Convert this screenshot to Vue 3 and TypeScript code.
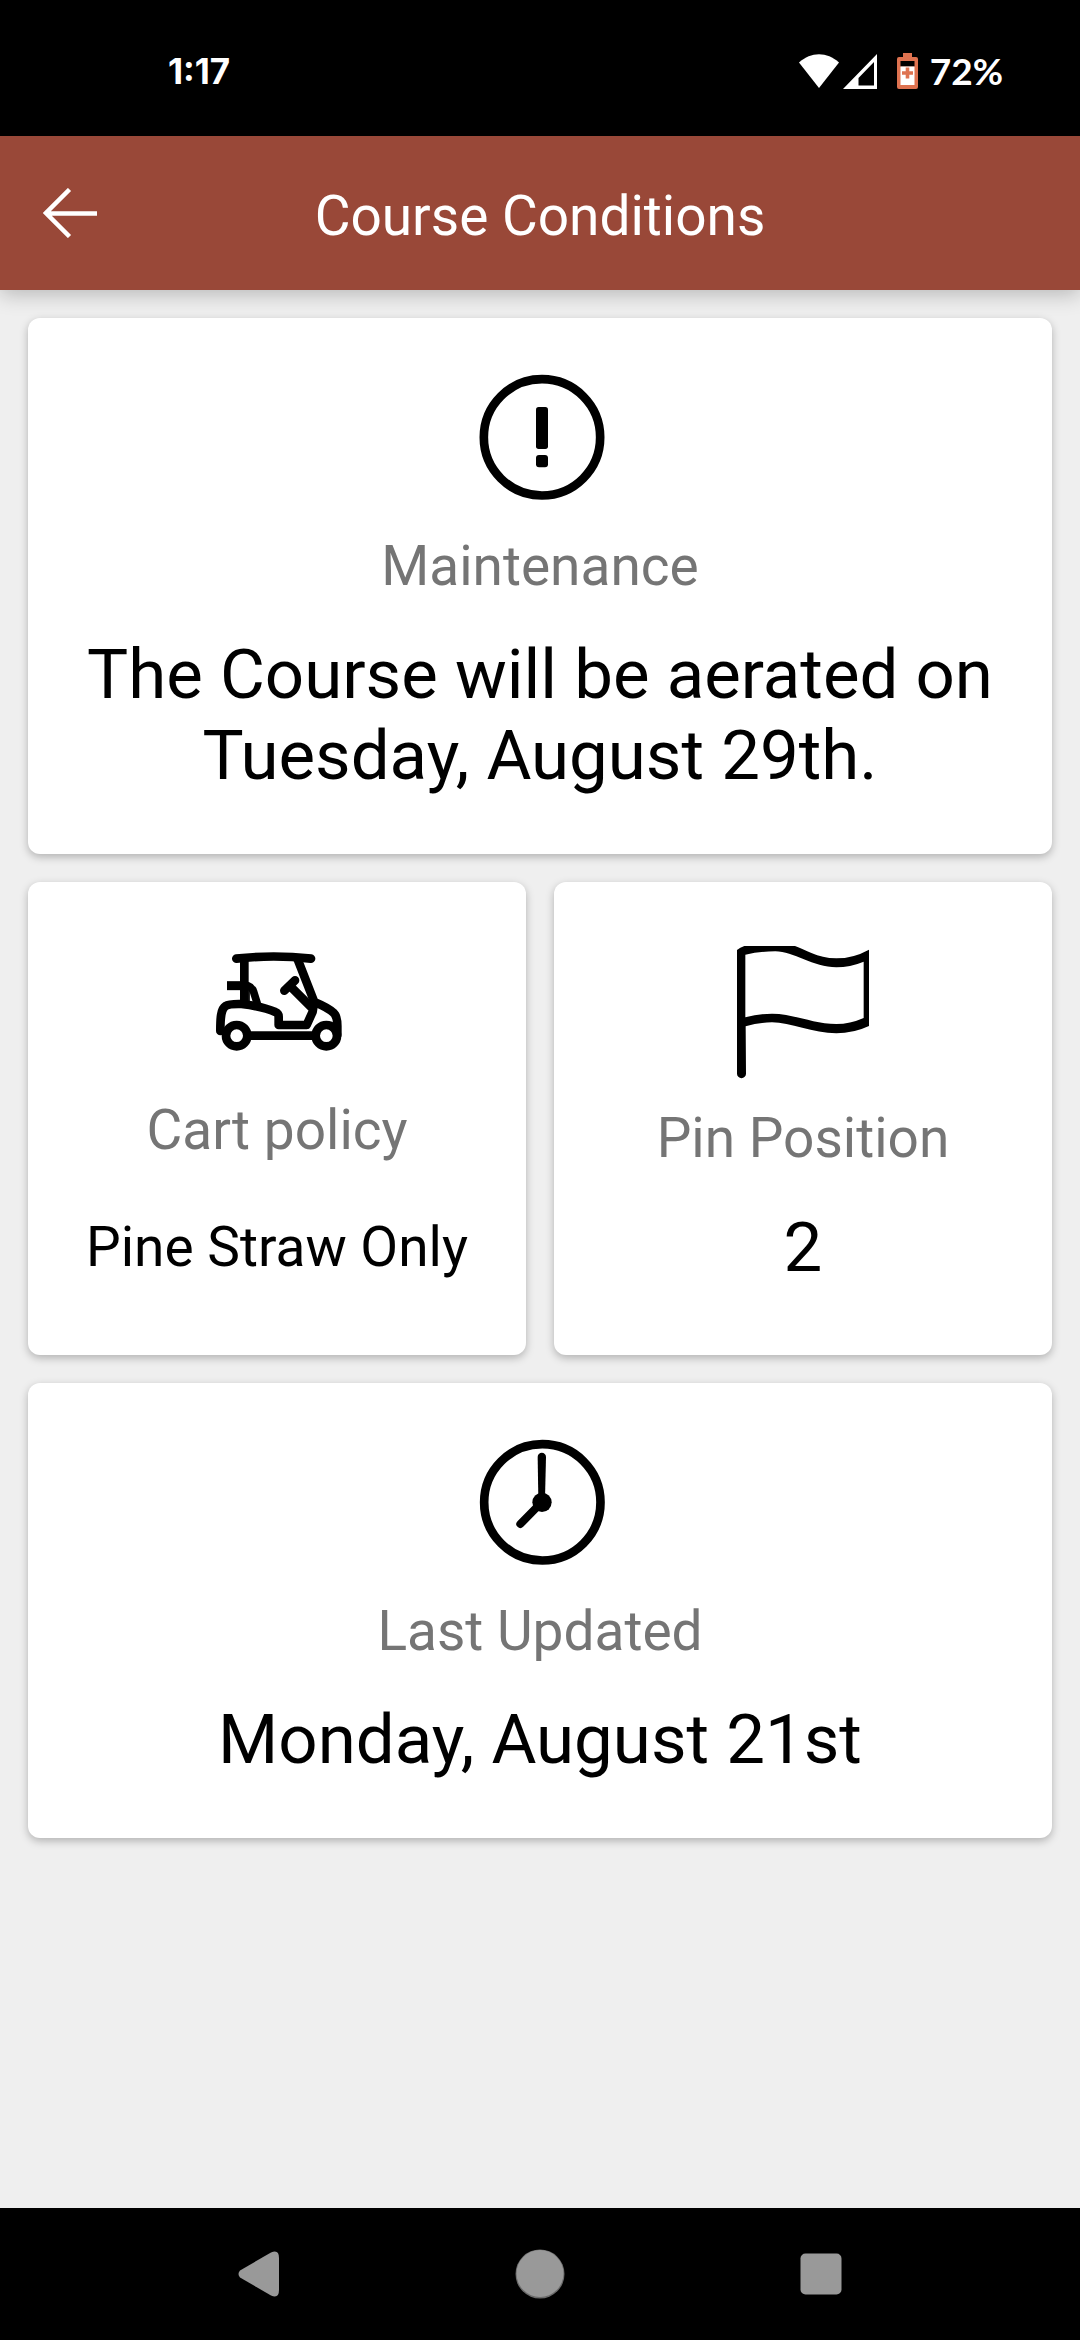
<script setup lang="ts">
interface Condition {
  id: 'maintenance' | 'cart' | 'pin' | 'updated'
  label: string
  value: string
}

const conditions: Condition[] = [
  { id: 'maintenance', label: 'Maintenance', value: 'The Course will be aerated on Tuesday, August 29th.' },
  { id: 'cart', label: 'Cart policy', value: 'Pine Straw Only' },
  { id: 'pin', label: 'Pin Position', value: '2' },
  { id: 'updated', label: 'Last Updated', value: 'Monday, August 21st' },
]
</script>

<template>
  <div class="screen">
    <div class="status">
      <span class="time">1:17</span>
      <div class="status-right">
        <svg class="wifi" viewBox="0 0 40 34" aria-hidden="true">
          <path d="M0 8.500C12-2.500 28-2.500 40 8.500L20 34Z" fill="#fff" />
        </svg>
        <svg class="signal" viewBox="0 0 34 35" aria-hidden="true">
          <path d="M34 0V35H0ZM31 8L15.500 24V31.500H31Z" fill="#fff" fill-rule="evenodd" />
        </svg>
        <svg class="battery" viewBox="0 0 21 36" aria-hidden="true">
          <path d="M6 0H15V4H19Q21 4 21 6V34Q21 36 19 36H2Q0 36 0 34V6Q0 4 2 4H6Z" fill="#de7250" />
          <path d="M3.500 8H17.500V13.500H3.500Z" fill="#000" />
          <path d="M3.500 13.500H17.500V32H3.500Z" fill="#fff" />
          <path d="M8.700 14.500H12.300V18.200H16V21.800H12.300V25.500H8.700V21.800H5V18.200H8.700Z" fill="#de7250" />
        </svg>
        <span class="charge">72%</span>
      </div>
    </div>

    <header class="bar">
      <button class="back" type="button" aria-label="Back">
        <svg viewBox="0 0 54 50" aria-hidden="true">
          <path d="M26.500 1.500L3 25L26.500 48.500M3 25.500H54" fill="none" stroke="#fff" stroke-width="4.500" />
        </svg>
      </button>
      <h1>Course Conditions</h1>
    </header>

    <main class="cards">
      <section v-for="item in conditions" :key="item.id" class="card" :class="item.id">
        <svg v-if="item.id === 'maintenance'" class="icon" viewBox="111 72 378 378" aria-hidden="true">
          <circle cx="306" cy="262" r="174.500" fill="none" stroke="#000" stroke-width="26" />
          <rect x="288" y="171" width="36" height="126" rx="8" />
          <rect x="288" y="315" width="36" height="37" rx="9" />
        </svg>
        <svg v-else-if="item.id === 'cart'" class="icon" viewBox="42 54 378 378" aria-hidden="true">
          <g fill="none" stroke="#000" stroke-width="26" stroke-linecap="round" stroke-linejoin="round">
            <path d="M109 116Q221 103 333 116" />
            <path d="M133 120V250" stroke-linecap="butt" />
            <path d="M81 197H135" stroke-linecap="butt" stroke-width="27" />
            <path d="M143 197Q157 202 161 216L171 248" stroke-width="23" />
            <path d="M147 202V250" stroke-width="5" />
            <path d="M61 333C61 295 62 267 77 258Q87 251 125 252Q190 260 226 276Q236 280 236 290V315H320L338 275L342 248" />
            <path d="M293 118L343 246Q384 263 400 278Q412 288 412 318V345" />
            <path d="M253 212L285 181M272 200L332 260" />
            <path d="M150 347H342" stroke-linecap="butt" />
          </g>
          <g fill="#fff" stroke="#000" stroke-width="26">
            <circle cx="110" cy="347" r="32" />
            <circle cx="379" cy="347" r="32" />
          </g>
        </svg>
        <svg v-else-if="item.id === 'pin'" class="icon" viewBox="78 54 402 402" aria-hidden="true">
          <path
            fill-rule="evenodd"
            d="M81 90Q90 82 103 78H255C285 87 320 115 379 115Q430 115 477 89V318Q430 340 379 340C310 340 240 307 186 307Q145 307 107 319L108 461A13.500 13.500 0 0 1 81 461ZM106 104V292Q145 281 186 281C250 281 310 312 379 312Q420 312 461 294V125Q420 142 379 142C310 142 250 94 196 94Q150 94 106 104Z"
          />
        </svg>
        <svg v-else class="icon" viewBox="51 57 378 378" aria-hidden="true">
          <circle cx="247" cy="247" r="174.500" fill="none" stroke="#000" stroke-width="26" />
          <circle cx="246" cy="247" r="29" />
          <path d="M233 111A12.500 12.500 0 0 1 258 111L255 235H235Z" />
          <path d="M181 312L240 252" stroke="#000" stroke-width="24" stroke-linecap="round" />
        </svg>
        <h2>{{ item.label }}</h2>
        <p>{{ item.value }}</p>
      </section>
    </main>

    <nav class="nav" aria-label="System">
      <button type="button" aria-label="Back">
        <svg viewBox="0 0 42 46" aria-hidden="true">
          <path d="M33 1.500Q41-2 41 7V39Q41 48 33 44.500L2 26.500Q-1 23 2 19.500Z" />
        </svg>
      </button>
      <button type="button" aria-label="Home">
        <svg class="home" viewBox="0 0 50 50" aria-hidden="true">
          <circle cx="25" cy="25" r="24.500" fill="#6b6b6b" />
          <circle cx="25" cy="24.500" r="23.500" />
        </svg>
      </button>
      <button type="button" aria-label="Recent apps">
        <svg viewBox="0 0 42 42" aria-hidden="true">
          <rect width="41" height="41" x="0.500" y="0.500" rx="5" />
        </svg>
      </button>
    </nav>
  </div>
</template>

<style>
body {
  margin: 0;
  background: #efefef;
}
</style>

<style scoped>
.screen {
  display: flex;
  flex-direction: column;
  min-height: 100vh;
  background: #efefef;
  color: #000;
  font-family: Roboto, "Liberation Sans", sans-serif;
}

button {
  display: flex;
  align-items: center;
  justify-content: center;
  padding: 0;
  border: 0;
  background: none;
}

svg {
  display: block;
}

.status {
  display: flex;
  align-items: center;
  justify-content: space-between;
  box-sizing: border-box;
  height: 136px;
  padding: 6px 77px 0 168px;
  background: #000;
  color: #fff;
}

.time {
  font: 700 35px/44px Inter, sans-serif;
}

.charge {
  font: 700 37px/44px Lato, sans-serif;
}

.status-right {
  display: flex;
  align-items: center;
}

.wifi {
  width: 40px;
  height: 34px;
  margin-right: 4px;
}

.signal {
  width: 34px;
  height: 35px;
  margin-right: 20px;
}

.battery {
  width: 21px;
  height: 36px;
  margin-right: 12px;
}

.bar {
  display: grid;
  grid-template-columns: 1fr auto 1fr;
  align-items: center;
  height: 154px;
  background: #994838;
  color: #fff;
  box-shadow: 0 4px 20px rgba(0, 0, 0, 0.24);
}

.back {
  width: 140px;
  height: 140px;
}

.back svg {
  width: 54px;
  height: 50px;
}

h1 {
  margin: 0;
  padding-top: 6px;
  font-size: 55px;
  font-weight: 400;
  line-height: 64px;
}

.cards {
  display: grid;
  grid-template-columns: 1fr 1fr;
  align-content: start;
  gap: 28px;
  flex: 1;
  padding: 28px;
}

.card {
  display: flex;
  flex-direction: column;
  align-items: center;
  grid-column: span 2;
  padding: 56px 28px 58px;
  border-radius: 12px;
  background: #fff;
  text-align: center;
  box-shadow: 0 3px 8px rgba(0, 0, 0, 0.26);
}

.icon {
  width: 126px;
  height: 126px;
  overflow: visible;
}

h2 {
  margin: 34px 0 36px;
  color: #757575;
  font-size: 55px;
  font-weight: 400;
  line-height: 64px;
}

p {
  margin: 0;
  font-size: 69px;
  line-height: 81px;
}

.cart,
.pin {
  grid-column: span 1;
  padding-bottom: 56px;
}

.cart p,
.pin p {
  display: flex;
  align-items: center;
  height: 103px;
  margin-top: auto;
}

.cart h2,
.pin h2 {
  margin-bottom: 26px;
}

.cart p {
  font-size: 55px;
}

.pin .icon {
  width: 134px;
  height: 134px;
}

.nav {
  display: grid;
  grid-template-columns: repeat(3, 26%);
  justify-content: center;
  height: 132px;
  background: #000;
}

.nav svg {
  width: 42px;
  fill: #999;
}

.nav .home {
  width: 50px;
}
</style>
